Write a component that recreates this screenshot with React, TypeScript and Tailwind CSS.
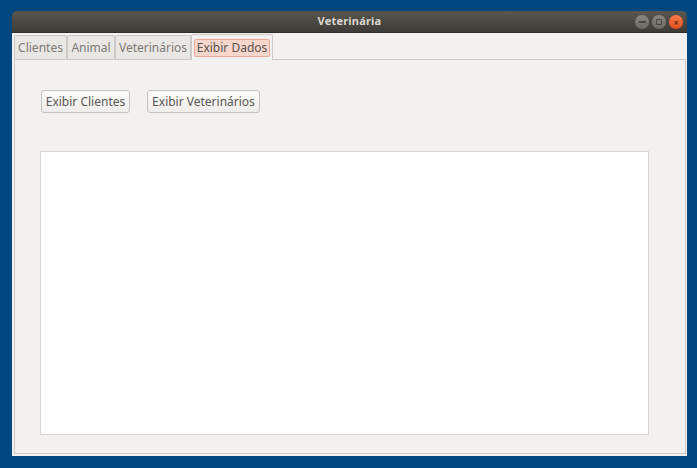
export default function App() {
  const tabs = ['Clientes', 'Animal', 'Veterinários'];
  const tabW = ['w-[53px]', 'w-[48px]', 'w-[76px]'];
  return (
    <div className="w-[697px] h-[468px] bg-[#00477f] pt-[11px] pl-[12px] font-['Noto_Sans','DejaVu_Sans',sans-serif]">
      <div className="w-[675px] h-[445px] flex flex-col rounded-t-[5px] overflow-hidden">
        {/* title bar */}
        <div className="relative h-[22px] bg-gradient-to-b from-[#5a5750] to-[#3d3b37] flex items-center justify-center border-b border-[#2f2e2b]">
          <span className="text-[11px] font-bold text-[#dcd8d0] tracking-[0.2px]">Veterinária</span>
          <div className="absolute right-[4px] top-[4px] flex gap-[3px]">
            <span className="w-[14px] h-[14px] rounded-full bg-gradient-to-b from-[#8a8780] to-[#6b6963] flex items-center justify-center">
              <span className="w-[7px] h-[2px] bg-[#4a4844]" />
            </span>
            <span className="w-[14px] h-[14px] rounded-full bg-gradient-to-b from-[#8a8780] to-[#6b6963] flex items-center justify-center">
              <span className="w-[6px] h-[6px] border border-[#4a4844] rounded-[1px]" />
            </span>
            <span className="w-[14px] h-[14px] rounded-full bg-gradient-to-b from-[#f77a4a] to-[#e54b1c] flex items-center justify-center text-[9px] leading-none text-[#6a2a12] font-bold">
              ×
            </span>
          </div>
        </div>
        {/* content */}
        <div className="flex-1 bg-[#f2f1f0] flex flex-col pl-[2px] pr-[1px] pb-[2px]">
          <div className="h-[26px] flex items-end">
            {tabs.map((t, i) => (
              <div
                key={t}
                className={`${tabW[i]} h-[24px] border border-b-0 border-[#cdc9c4] bg-[#e9e7e4] rounded-t-[2px] flex items-center justify-center text-[12px] text-[#7c7a76]`}
              >
                {t}
              </div>
            ))}
            <div className="w-[82px] h-[26px] -mb-[1px] relative z-10 border border-b-0 border-[#cdc9c4] bg-[#f2f1f0] rounded-t-[2px] flex items-center justify-center">
              <span className="h-[18px] px-[2px] bg-[#f8d6cc] border border-[#eba897] rounded-[2px] flex items-center text-[12px] text-[#57534f]">
                Exibir Dados
              </span>
            </div>
          </div>
          <div className="flex-1 border border-[#cdc9c4] bg-[#f2f1f0] flex flex-col pl-[25px] pt-[30px]">
            <div className="flex gap-[17px] pl-[1px]">
              <button className="w-[89px] h-[23px] rounded-[3px] border border-[#c6c2bd] bg-gradient-to-b from-[#fbfbfa] to-[#eeedeb] text-[12px] text-[#5a5753] flex items-center justify-center">
                Exibir Clientes
              </button>
              <button className="w-[113px] h-[23px] rounded-[3px] border border-[#c6c2bd] bg-gradient-to-b from-[#fbfbfa] to-[#eeedeb] text-[12px] text-[#5a5753] flex items-center justify-center">
                Exibir Veterinários
              </button>
            </div>
            <div className="mt-[38px] w-[609px] h-[284px] bg-white border border-[#d8d5d1]" />
          </div>
        </div>
      </div>
    </div>
  );
}
